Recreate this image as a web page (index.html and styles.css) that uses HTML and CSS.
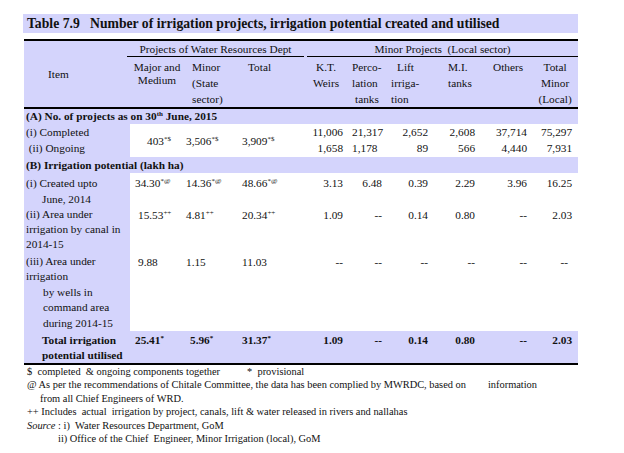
FILE: index.html
```html
<!DOCTYPE html>
<html>
<head>
<meta charset="utf-8">
<link rel="stylesheet" href="styles.css">
</head>
<body>
<div class="page">
  <div class="title">Table 7.9&nbsp;&nbsp; Number of irrigation projects, irrigation potential created and utilised</div>
  <table class="tbl">
    <colgroup>
      <col class="w-item"><col class="w-major"><col class="w-minor"><col class="w-total">
      <col class="w-kt"><col class="w-perco"><col class="w-lift"><col class="w-mi"><col class="w-oth"><col class="w-tm">
    </colgroup>
    <thead>
      <tr class="h1">
        <th rowspan="2" class="item-h">Item</th>
        <th colspan="3" class="grp"><div class="grp-l">Projects of Water Resources Dept</div></th>
        <th colspan="6" class="grp"><div class="grp-r">Minor Projects&nbsp; (Local sector)</div></th>
      </tr>
      <tr class="h2">
        <th class="hc-major">Major and<br>Medium</th>
        <th class="hc-minor">Minor<br>(State<br>sector)</th>
        <th class="hc-total">Total</th>
        <th class="hc-kt">K.T.<br>Weirs</th>
        <th class="hc-perco">Perco-<br>lation<br><span class="ind3">tanks</span></th>
        <th class="hc-lift"><span class="ind6">Lift</span><br>irriga-<br>tion</th>
        <th class="hc-mi">M.I.<br>tanks</th>
        <th class="hc-oth">Others</th>
        <th class="hc-tm">Total<br>Minor<br>(Local)</th>
      </tr>
    </thead>
    <tbody>
      <tr class="r-a sec">
        <td colspan="10" class="sec-t">(A) No. of projects as on 30<sup>th</sup> June, 2015</td>
      </tr>
      <tr class="r-c">
        <td class="item">(i) Completed<br>&nbsp;(ii) Ongoing</td>
        <td class="lm mid pl17">403<sup>*$</sup></td>
        <td class="ln mid">3,506<sup>*$</sup></td>
        <td class="lt mid">3,909<sup>*$</sup></td>
        <td class="num">11,006<br>1,658</td>
        <td class="num lft">21,317<br>1,178</td>
        <td class="num">2,652<br>89</td>
        <td class="num">2,608<br>566</td>
        <td class="num">37,714<br>4,440</td>
        <td class="num last">75,297<br>7,931</td>
      </tr>
      <tr class="r-b sec">
        <td colspan="10" class="sec-t">(B) Irrigation potential (lakh ha)</td>
      </tr>
      <tr class="r-1">
        <td class="item">(i) Created upto<br><span class="ind16">June, 2014</span></td>
        <td class="lm">34.30<sup>*@</sup></td>
        <td class="ln">14.36<sup>*@</sup></td>
        <td class="lt">48.66<sup>*@</sup></td>
        <td class="num">3.13</td>
        <td class="num">6.48</td>
        <td class="num">0.39</td>
        <td class="num">2.29</td>
        <td class="num">3.96</td>
        <td class="num last">16.25</td>
      </tr>
      <tr class="r-2">
        <td class="item lh15 pt0">(ii) Area under<br>irrigation by canal in<br>2014-15</td>
        <td class="lm pl8 pt0">15.53<sup>++</sup></td>
        <td class="ln pt0">4.81<sup>++</sup></td>
        <td class="lt pt0">20.34<sup>++</sup></td>
        <td class="num pt0">1.09</td>
        <td class="num pt0">--</td>
        <td class="num pt0">0.14</td>
        <td class="num pt0">0.80</td>
        <td class="num pt0">--</td>
        <td class="num last pt0">2.03</td>
      </tr>
      <tr class="r-3">
        <td class="item lh154">(iii) Area under<br>irrigation<br><span class="ind17">by wells in</span><br><span class="ind17">command area</span><br><span class="ind17">during 2014-15</span></td>
        <td class="lm pl8">9.88</td>
        <td class="ln">1.15</td>
        <td class="lt">11.03</td>
        <td class="num">--</td>
        <td class="num">--</td>
        <td class="num">--</td>
        <td class="num">--</td>
        <td class="num">--</td>
        <td class="num dash-last">--</td>
      </tr>
      <tr class="r-t">
        <td class="item tot-item">Total irrigation<br>potential utilised</td>
        <td class="lm">25.41<sup>*</sup></td>
        <td class="ln pl6">5.96<sup>*</sup></td>
        <td class="lt">31.37<sup>*</sup></td>
        <td class="num">1.09</td>
        <td class="num">--</td>
        <td class="num">0.14</td>
        <td class="num">0.80</td>
        <td class="num">--</td>
        <td class="num last">2.03</td>
      </tr>
    </tbody>
  </table>
  <div class="notes">
    <p>$ &nbsp;completed &nbsp;&amp; ongoing components together<span class="prov">* &nbsp;provisional</span></p>
    <p>@ As per the recommendations of Chitale Committee, the data has been complied by MWRDC, based on<span class="info">information</span></p>
    <p class="ind-from">from all Chief Engineers of WRD.</p>
    <p>++ Includes &nbsp;actual &nbsp;irrigation by project, canals, lift &amp; water released in rivers and nallahas</p>
    <p><em>Source</em> : i) &nbsp;Water Resources Department, GoM</p>
    <p class="ind-src">ii) Office of the Chief &nbsp;Engineer, Minor Irrigation (local), GoM</p>
  </div>
</div>
</body>
</html>
```

FILE: styles.css
```css
* { box-sizing: border-box; }
body {
  margin: 0;
  background: #ffffff;
  color: #111111;
  font-family: "Liberation Serif", "Times New Roman", serif;
}
.page {
  padding: 14px 0 0 23px;
  width: 600px;
}
.title {
  width: 555px;
  height: 19px;
  background: #d4d4fc;
  font-size: 13.7px;
  font-weight: bold;
  line-height: 20px;
  padding-left: 4px;
  white-space: nowrap;
}
.tbl {
  margin: 6px 0 0 1px;
  width: 554px;
  table-layout: fixed;
  border-collapse: separate;
  border-spacing: 0;
  font-size: 11.3px;
}
.w-item { width: 106px; }
.w-major { width: 54px; }
.w-minor { width: 54px; }
.w-total { width: 67px; }
.w-kt { width: 40px; }
.w-perco { width: 39px; }
.w-lift { width: 46px; }
.w-mi { width: 47px; }
.w-oth { width: 52px; }
.w-tm { width: 49px; }

.tbl th, .tbl td {
  padding: 0;
  font-weight: normal;
  white-space: nowrap;
  vertical-align: top;
  text-align: left;
}
thead th { background: #d4d4fc; }
.h1 { height: 18px; }
.h1 th { border-top: 2px solid #000; }
.h2 { height: 52px; }
.h2 th { border-bottom: 2px solid #000; line-height: 16px; padding-top: 2px; }
.tbl .item-h {
  border-bottom: 2px solid #000;
  vertical-align: middle;
  padding-left: 24px;
  padding-top: 0;
}
.grp-l, .grp-r {
  height: 16px;
  padding-top: 2px;
  line-height: 13px;
  border-bottom: 1px solid #000;
  text-align: center;
}
.grp-l { margin: 0 1px 0 -3px; }
.grp-r { margin-left: 2px; }

.tbl .hc-major { text-align: center; line-height: 13px; padding-top: 4px; }
.tbl .hc-minor { padding-left: 8px; }
.tbl .hc-total { padding-left: 10px; }
.tbl .hc-kt { text-align: center; padding-left: 2px; }
.tbl .hc-perco { padding-left: 7px; }
.tbl .hc-lift { padding-left: 7px; }
.tbl .hc-mi { padding-left: 18px; }
.tbl .hc-oth { padding-left: 16px; }
.tbl .hc-tm { text-align: center; padding-left: 3px; }
.ind3 { padding-left: 3px; }
.ind6 { padding-left: 6px; }
.ind16 { padding-left: 16px; }
.ind17 { padding-left: 17px; }

.sec td { background: #d4d4fc; }
.r-a { height: 15px; }
.r-a .sec-t { line-height: 15px; padding-top: 0; }
.r-b { height: 16px; }
.r-b .sec-t { line-height: 16px; padding-top: 0; }
.tbl .sec-t { font-weight: bold; padding-left: 2px; }

.r-c { height: 33px; }
.r-1 { height: 34px; }
.r-2 { height: 45px; }
.r-3 { height: 79px; }
.r-t { height: 33px; }

.tbl td { line-height: 16px; padding-top: 2px; }
.r-c td { padding-top: 0; }
.tbl .item { background: #d4d4fc; padding-left: 2px; }
.tbl .lh15 { line-height: 15px; }
.tbl .lh154 { line-height: 15.4px; }
.tbl .pt0 { padding-top: 0; }

.tbl .lm { padding-left: 5px; }
.tbl .ln { padding-left: 2px; }
.tbl .lt { padding-left: 4px; }
.tbl .pl17 { padding-left: 17px; }
.tbl .pl8 { padding-left: 8px; }
.tbl .pl6 { padding-left: 6px; }
.tbl .mid { vertical-align: middle; padding-top: 0; }

.tbl .num { text-align: right; padding-right: 2px; }
.tbl .num.last { padding-right: 6px; }
.tbl .num.dash-last { padding-right: 10px; }
.tbl .num.lft { text-align: left; padding-left: 7px; padding-right: 0; }

.r-t td {
  background: #d4d4fc;
  font-weight: bold;
  border-bottom: 2px solid #000;
  line-height: 15px;
}
.tbl .tot-item { padding-left: 18px; }

sup {
  font-size: 0.62em;
  vertical-align: baseline;
  position: relative;
  top: -0.55em;
  line-height: 0;
}

.notes {
  margin-left: 4px;
  font-size: 10.4px;
  line-height: 13.4px;
}
.notes p { margin: 0; white-space: nowrap; }
.prov { margin-left: 27px; }
.info { margin-left: 22px; }
.ind-from { padding-left: 13px; }
.ind-src { padding-left: 31px; }
```
